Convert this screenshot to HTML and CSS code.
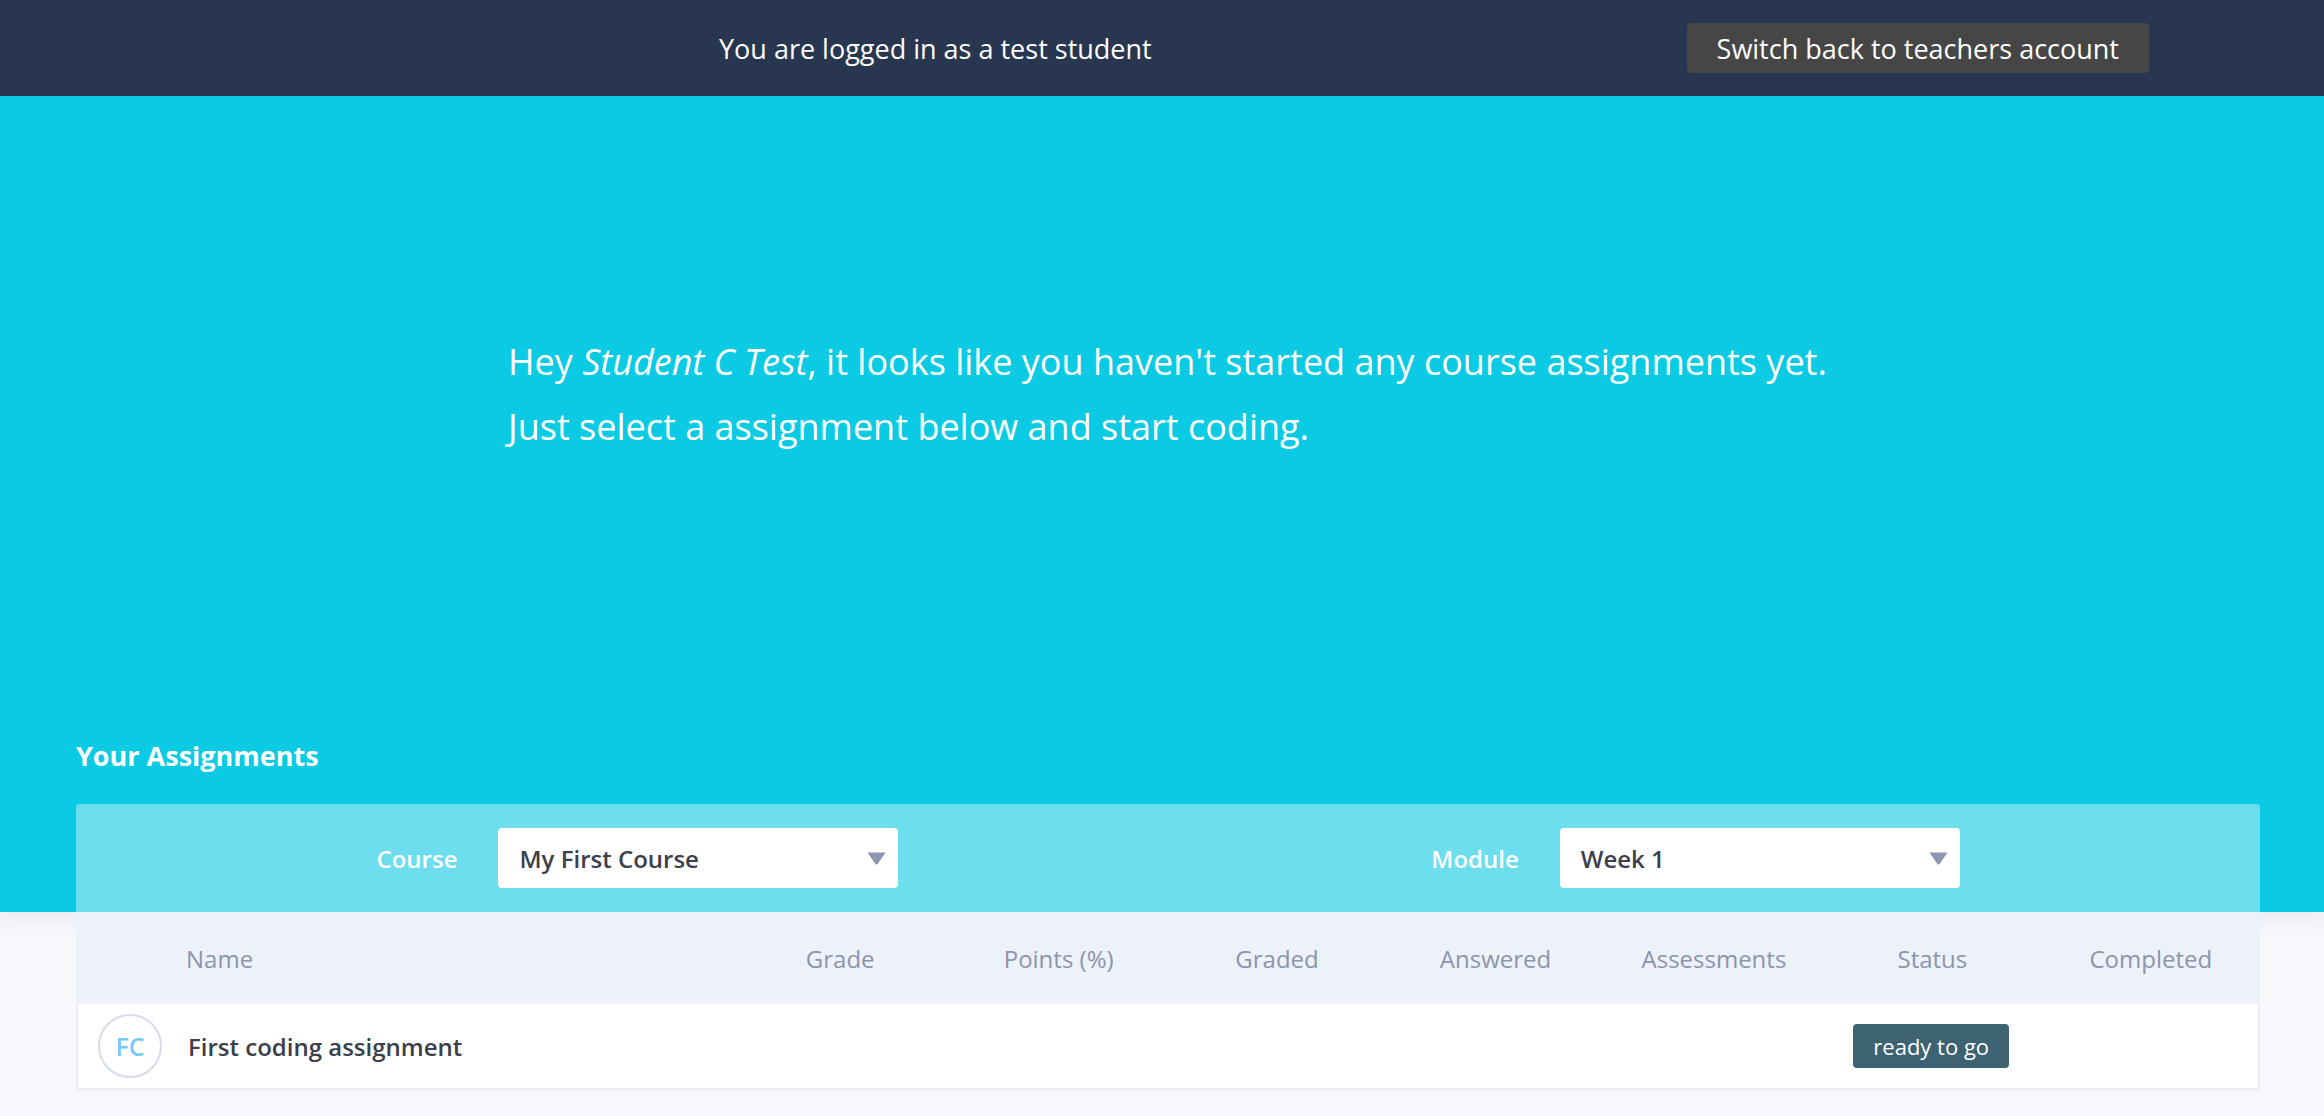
FILE: index.html
```html
<!DOCTYPE html>
<html lang="en">
<head>
<meta charset="utf-8">
<title>Your Assignments</title>
<link rel="stylesheet" href="styles.css">
</head>
<body>
  <header class="topbar">
    <span class="topbar-text">You are logged in as a test student</span>
    <button class="switch-btn">Switch back to teachers account</button>
  </header>

  <section class="hero">
    <div class="hero-msg">
      <p>Hey <em>Student C Test</em>, it looks like you haven't started any course assignments yet.</p>
      <p>Just select a assignment below and start coding.</p>
    </div>

    <div class="main">
      <h2 class="section-title">Your Assignments</h2>
      <div class="filters">
        <div class="filter">
          <span class="filter-label">Course</span>
          <div class="select">
            <span>My First Course</span>
            <svg class="caret" width="19" height="13" viewBox="0 0 19 13"><path d="M0.5 0.5 H18.5 L10.6 12 Q9.5 13.2 8.4 12 Z" fill="#8d95b0"/></svg>
          </div>
        </div>
        <div class="filter">
          <span class="filter-label">Module</span>
          <div class="select">
            <span>Week 1</span>
            <svg class="caret" width="19" height="13" viewBox="0 0 19 13"><path d="M0.5 0.5 H18.5 L10.6 12 Q9.5 13.2 8.4 12 Z" fill="#8d95b0"/></svg>
          </div>
        </div>
      </div>
    </div>
  </section>

  <div class="main">
    <div class="table">
      <div class="thead">
        <div class="th th-name">Name</div>
        <div class="th">Grade</div>
        <div class="th">Points (%)</div>
        <div class="th">Graded</div>
        <div class="th">Answered</div>
        <div class="th">Assessments</div>
        <div class="th">Status</div>
        <div class="th">Completed</div>
      </div>
      <div class="trow">
        <div class="td td-name">
          <span class="avatar">FC</span>
          <span class="assign-name">First coding assignment</span>
        </div>
        <div class="td"></div>
        <div class="td"></div>
        <div class="td"></div>
        <div class="td"></div>
        <div class="td"></div>
        <div class="td"><span class="badge">ready to go</span></div>
        <div class="td"></div>
      </div>
    </div>
  </div>
</body>
</html>
```

FILE: styles.css
```css
* { box-sizing: border-box; }

body {
  margin: 0;
  background: #f7f8fc;
  font-family: "Open Sans", "Noto Sans", sans-serif;
  color: #3b404c;
}

.topbar {
  height: 96px;
  background: #28374f;
  display: flex;
  align-items: center;
  justify-content: space-between;
  padding: 0 175px 0 719px;
  color: #fff;
  font-size: 27px;
}

.switch-btn {
  height: 50px;
  padding: 0 30px;
  border: none;
  border-radius: 4px;
  background: #464646;
  color: #fff;
  font-family: inherit;
  font-size: 27px;
}

.hero {
  background: #0acbe3;
  height: 816px;
  box-shadow: 0 8px 18px rgba(40, 55, 79, 0.07);
  display: flex;
  flex-direction: column;
}

.hero-msg {
  width: 1308px;
  margin: 233px auto 0;
  color: #fff;
  font-size: 36px;
  line-height: 65px;
}

.hero-msg p {
  margin: 0;
  white-space: nowrap;
}

.main {
  padding: 0 64px 0 76px;
}

.hero .main { margin-top: auto; }

.section-title {
  margin: 0 0 30px;
  color: #fff;
  font-size: 27px;
  font-weight: 700;
  line-height: 36px;
}

.filters {
  height: 108px;
  background: #6cdeed;
  border-radius: 4px 4px 0 0;
  display: grid;
  grid-template-columns: 1061px 1fr;
  align-items: center;
  padding: 0 37px 0 31px;
}

.filter {
  display: flex;
  align-items: center;
  justify-content: center;
  gap: 41px;
}

.filter-label {
  color: #fff;
  font-size: 24px;
  font-weight: 600;
}

.select {
  width: 400px;
  height: 60px;
  background: #fff;
  border-radius: 4px;
  display: flex;
  align-items: center;
  justify-content: space-between;
  padding: 0 12px 0 21px;
  font-size: 24px;
  font-weight: 600;
  color: #3b404c;
}

.caret { display: block; }

.table {
  background: #fff;
}

.thead,
.trow {
  display: grid;
  grid-template-columns: 655px repeat(7, 1fr);
  align-items: center;
}

.thead {
  height: 92px;
  background: #edf1f9;
}

.th {
  text-align: center;
  color: #8c94ae;
  font-size: 24px;
}

.th-name {
  text-align: left;
  padding-left: 110px;
}

.trow {
  height: 86px;
  border: 2px solid #e9edf5;
  border-top: none;
  background: #fff;
}

.td {
  display: flex;
  justify-content: center;
  align-items: center;
}

.td-name {
  justify-content: flex-start;
  padding-left: 20px;
}

.avatar {
  width: 64px;
  height: 64px;
  border-radius: 50%;
  border: 2px solid #d6dbe9;
  display: flex;
  align-items: center;
  justify-content: center;
  color: #77c9fb;
  font-size: 25px;
  font-weight: 600;
}

.assign-name {
  margin-left: 26px;
  font-size: 24px;
  font-weight: 600;
  color: #3b404c;
}

.badge {
  height: 44px;
  padding: 0 20px;
  display: flex;
  align-items: center;
  background: #3d6272;
  border-radius: 4px;
  color: #fff;
  font-size: 22px;
}
```
